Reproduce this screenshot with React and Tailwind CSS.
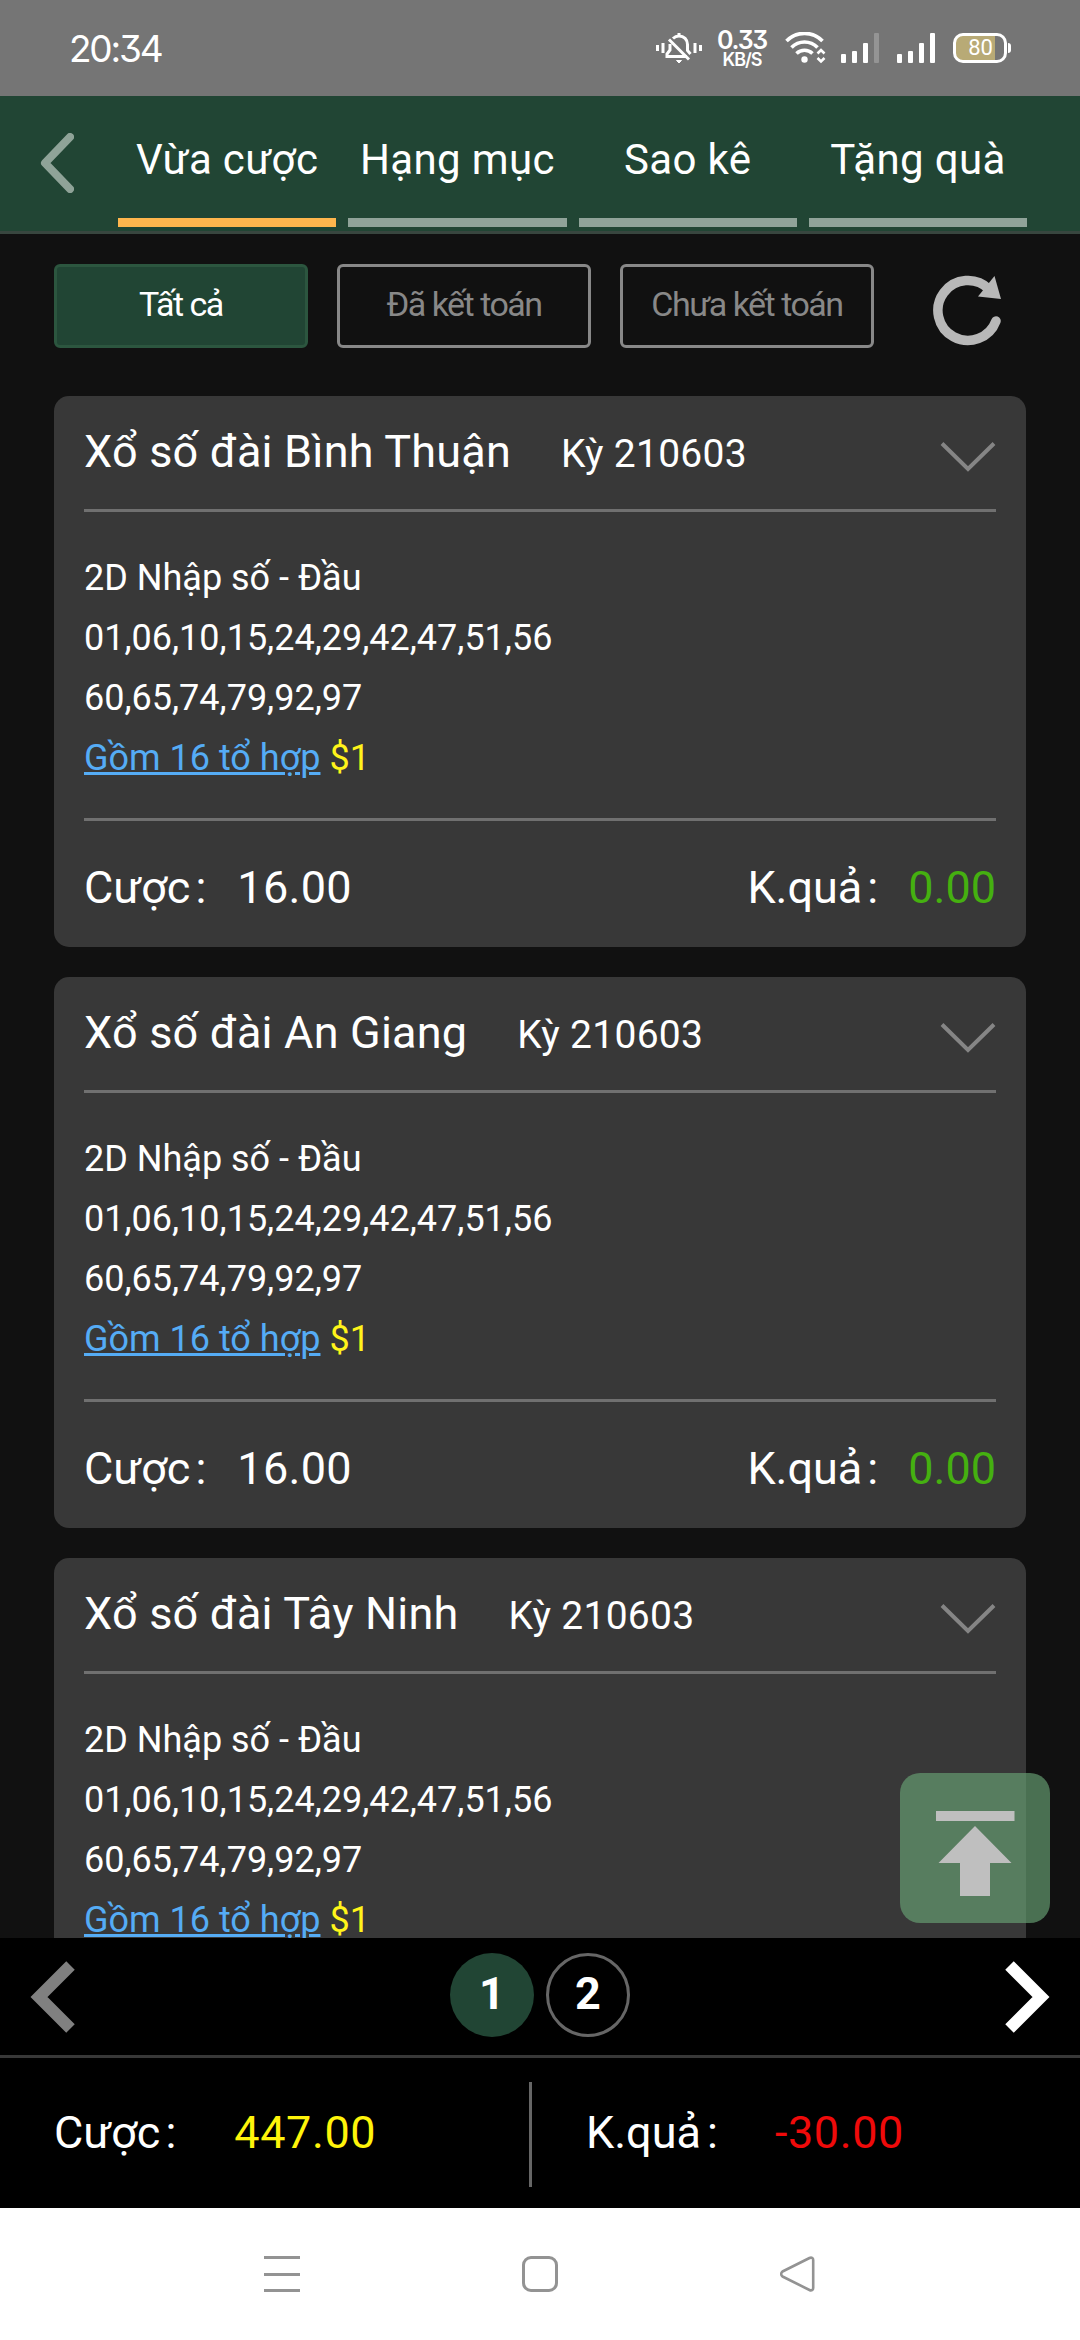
import React, { useState } from 'react';

const tabs = ['Vừa cược', 'Hạng mục', 'Sao kê', 'Tặng quà'];
const filters = ['Tất cả', 'Đã kết toán', 'Chưa kết toán'];

const bets = [
  { id: 1, name: 'Xổ số đài Bình Thuận', period: 'Kỳ 210603' },
  { id: 2, name: 'Xổ số đài An Giang', period: 'Kỳ 210603' },
  { id: 3, name: 'Xổ số đài Tây Ninh', period: 'Kỳ 210603' },
];

const StatusBar = () => (
  <div className="h-24 shrink-0 bg-[#757575] flex items-center justify-between pl-[69px] pr-[69px] text-white">
    <span className="font-[Inter] text-[37px] leading-none tracking-[-2.2px] [font-feature-settings:'cv09']">20:34</span>
    <div className="flex items-center">
      {/* Muted bell */}
      <svg width="46" height="32" viewBox="0 0 46 32" fill="none" stroke="#fff" strokeWidth="3">
        <path d="M1.5 13v6M7 11v10M39 11v10M44.500 13v6" />
        <path d="M17 6.500c1.500-1.500 3.500-2.500 6-2.500 5 0 8.500 3.500 8.500 8.500v6l3 3.500" />
        <path d="M14 12v6l-3 4v2.500h20M23 1v3" />
        <path d="M13 7.500l20 20" />
        <path d="M20.500 28.500h5l-2.500 2.500z" fill="#fff" strokeWidth="1" />
      </svg>
      <div className="ml-[15px] w-[50px] flex flex-col items-center font-[Inter] font-semibold [font-feature-settings:'cv09']">
        <span className="text-[25px] leading-[20px] tracking-[-1.2px]">0.33</span>
        <span className="text-[18px] leading-[14px] tracking-[-1px] mt-[3px]">KB/S</span>
      </div>
      {/* Wifi */}
      <svg className="ml-[18px]" width="42" height="32" viewBox="0 0 42 32" fill="none" stroke="#fff" strokeWidth="3.600">
        <path d="M1.500 9a25 25 0 0 1 36 0" />
        <path d="M6.500 15.500a18 18 0 0 1 26 0" />
        <path d="M11.500 21.500a11.500 11.500 0 0 1 16 0" />
        <circle cx="19.500" cy="27.500" r="3.200" fill="#fff" stroke="none" />
        <path d="M32.500 21.500l3.500-3.500 3.500 3.500M32.500 26l3.500 3.500 3.500-3.500" strokeWidth="2.600" />
      </svg>
      <svg className="ml-[14px]" width="39" height="30" viewBox="0 0 39 30" fill="#fff">
        <rect x="0" y="21" width="5" height="9" rx="1" />
        <rect x="11" y="18" width="5" height="12" rx="1" />
        <rect x="22" y="10" width="5" height="20" rx="1" />
        <rect x="33" y="0" width="5" height="30" rx="1" fill="#949494" />
      </svg>
      <svg className="ml-[17px]" width="39" height="30" viewBox="0 0 39 30" fill="#fff">
        <rect x="0" y="21" width="5" height="9" rx="1" />
        <rect x="11" y="18" width="5" height="12" rx="1" />
        <rect x="22" y="10" width="5" height="20" rx="1" />
        <rect x="33" y="0" width="5" height="30" rx="1" />
      </svg>
      <div className="ml-[17px] flex items-center">
        <div className="w-[54px] h-[30px] rounded-[10px] border-[3px] border-white bg-[linear-gradient(to_right,#b8aa76_39px,#757575_39px)] pl-px flex items-center justify-center font-[Roboto] text-[22px] leading-none">80</div>
        <div className="w-[3px] h-[10px] ml-px rounded-r bg-white" />
      </div>
    </div>
  </div>
);

const Header = ({ active, onChange }) => (
  <div className="h-[138px] shrink-0 bg-[#214534] border-b-[3px] border-[#38463f] flex">
    <button className="w-[118px] pl-10 pb-px flex items-center">
      <svg width="34" height="60" viewBox="0 0 34 60" fill="none" stroke="#8fa398" strokeWidth="8" strokeLinecap="round" strokeLinejoin="round">
        <path d="M30 4L5 30l25 26" />
      </svg>
    </button>
    <div className="w-[909px] grid grid-cols-4 gap-3">
      {tabs.map((tab) => (
        <button key={tab} onClick={() => onChange(tab)} className="flex flex-col text-center">
          <span className="w-full h-[122px] pt-[6px] text-[42px] leading-[116px] tracking-[0.35px] whitespace-nowrap">{tab}</span>
          <span className={tab === active ? 'w-full h-[9px] bg-[#ffb64d]' : 'w-full h-[9px] bg-[#90a399]'} />
        </button>
      ))}
    </div>
  </div>
);

const FilterBar = ({ active, onChange }) => (
  <div className="flex pt-[30px] pl-[54px] gap-[29px]">
    {filters.map((filter) => (
      <button
        key={filter}
        onClick={() => onChange(filter)}
        className={
          filter === active
            ? 'w-[254px] h-[84px] pb-[3px] rounded-md border-[3px] border-[#2c563f] bg-[#214534] text-[34px] tracking-[-1.5px] text-white'
            : 'w-[254px] h-[84px] pb-[3px] rounded-md border-[3px] border-[#888] text-[34px] tracking-[-1.5px] text-[#888]'
        }
      >
        {filter}
      </button>
    ))}
    <button className="ml-[30px] mt-[11px] h-[71px]">
      <svg width="70" height="71" viewBox="0 0 70 71" fill="none">
        <path d="M63 46A30 30 0 1 1 56 14.100" stroke="#b8b8b8" strokeWidth="9.500" strokeLinecap="round" />
        <path d="M61.500 1L68 24l-23-2.500z" fill="#b8b8b8" />
      </svg>
    </button>
  </div>
);

const BetCard = ({ bet }) => (
  <div className="h-[551px] shrink-0 rounded-[15px] bg-[#383838] px-[30px] flex flex-col">
    <div className="h-[116px] border-b-[3px] border-[#707070] flex items-center justify-between">
      <div className="flex items-baseline">
        <span className="text-[45px] leading-[60px] tracking-[0.2px]">{bet.name}</span>
        <span className="ml-[50px] text-[39px] leading-[60px] tracking-[0.3px]">{bet.period}</span>
      </div>
      <svg className="mt-[8px]" width="56" height="30" viewBox="0 0 56 30" fill="none" stroke="#858585" strokeWidth="4">
        <path d="M2 1.500l26 25.500 26-25.500" />
      </svg>
    </div>
    <div className="h-[309px] pt-[36px] border-b-[3px] border-[#707070] text-[36px] leading-[60px]">
      <p>2D Nhập số - Đầu</p>
      <p>01,06,10,15,24,29,42,47,51,56</p>
      <p>60,65,74,79,92,97</p>
      <p>
        <a className="text-[#55acf5] underline decoration-[3px] underline-offset-[2px]">Gồm 16 tổ hợp</a> <span className="text-[#fff41a]">$1</span>
      </p>
    </div>
    <div className="h-[126px] pt-[7px] flex items-center justify-between text-[45px]">
      <span>Cược<span className="ml-[5px]">:</span><span className="ml-[31px] tracking-[0.3px]">16.00</span></span>
      <span>K.quả<span className="ml-[5px]">:</span><span className="ml-[30px] text-[#45b010]">0.00</span></span>
    </div>
  </div>
);

const Pagination = ({ page, onChange }) => (
  <div className="h-[120px] shrink-0 border-b-[3px] border-[#383838] bg-black px-[30px] flex items-center justify-between">
    <button onClick={() => onChange(1)}>
      <svg width="45" height="72" viewBox="0 0 45 72" fill="none" stroke="#808080" strokeWidth="12">
        <path d="M40.500 4.500L9 36l31.500 31.500" />
      </svg>
    </button>
    <div className="flex gap-3 pb-[3px] text-[45px] font-bold">
      {[1, 2].map((n) => (
        <button
          key={n}
          onClick={() => onChange(n)}
          className={
            n === page
              ? 'size-[84px] pb-[3px] rounded-full bg-[#214534] leading-none'
              : 'size-[84px] pb-[3px] rounded-full border-[3px] border-[#666] leading-none'
          }
        >
          {n}
        </button>
      ))}
    </div>
    <button onClick={() => onChange(2)}>
      <svg width="45" height="72" viewBox="0 0 45 72" fill="none" stroke="#fff" strokeWidth="12">
        <path d="M4.500 4.500L36 36 4.500 67.500" />
      </svg>
    </button>
  </div>
);

const Totals = () => (
  <div className="h-[150px] shrink-0 bg-black flex items-center text-[45px]">
    <div className="w-[529px] pl-[54px]">
      Cược<span className="ml-[5px]">:</span><span className="ml-[58px] tracking-[0.6px] text-[#fff40a]">447.00</span>
    </div>
    <div className="w-[3px] h-[105px] mt-[3px] bg-[#666]" />
    <div className="pl-[54px]">
      K.quả<span className="ml-[6px]">:</span><span className="ml-[57px] tracking-[0.6px] text-[#f00a0a]">-30.00</span>
    </div>
  </div>
);

const NavBar = () => (
  <div className="h-[132px] shrink-0 bg-white flex items-center justify-between px-[264px]">
    <div className="w-9 h-9 flex flex-col justify-between">
      <span className="h-[3px] bg-[#939393]" />
      <span className="h-[3px] bg-[#939393]" />
      <span className="h-[3px] bg-[#939393]" />
    </div>
    <div className="w-9 h-9 rounded-[9px] border-[3px] border-[#939393]" />
    <svg width="36" height="36" viewBox="0 0 36 36" fill="none" stroke="#939393" strokeWidth="2.600" strokeLinejoin="round">
      <path d="M2.500 15.500L29.500 2c2-1 3.700 0 3.700 2v28c0 2-1.700 3-3.700 2L2.500 20.500c-1.800-1.500-1.800-3.500 0-5z" />
    </svg>
  </div>
);

const App = () => {
  const [activeTab, setActiveTab] = useState('Vừa cược');
  const [activeFilter, setActiveFilter] = useState('Tất cả');
  const [page, setPage] = useState(1);

  return (
    <div className="w-[1080px] h-[2340px] overflow-hidden flex flex-col bg-[#111] font-[Roboto,sans-serif] text-white">
      <StatusBar />
      <Header active={activeTab} onChange={setActiveTab} />
      <div className="relative h-[1704px] shrink-0 overflow-hidden">
        <FilterBar active={activeFilter} onChange={setActiveFilter} />
        <div className="mt-12 mx-[54px] flex flex-col gap-[30px]">
          {bets.map((bet) => (
            <BetCard key={bet.id} bet={bet} />
          ))}
        </div>
        {/* Floating back-to-top button */}
        <button className="absolute right-[30px] bottom-[15px] size-[150px] rounded-[20px] bg-[#659e71]/68">
          <svg width="150" height="150" viewBox="0 0 150 150" fill="#bfbfbf">
            <rect x="36" y="38" width="78.500" height="10" />
            <path d="M75 53l36.500 37H90v33H60V90H38.500z" />
          </svg>
        </button>
      </div>
      <Pagination page={page} onChange={setPage} />
      <Totals />
      <NavBar />
    </div>
  );
};

export default App;
